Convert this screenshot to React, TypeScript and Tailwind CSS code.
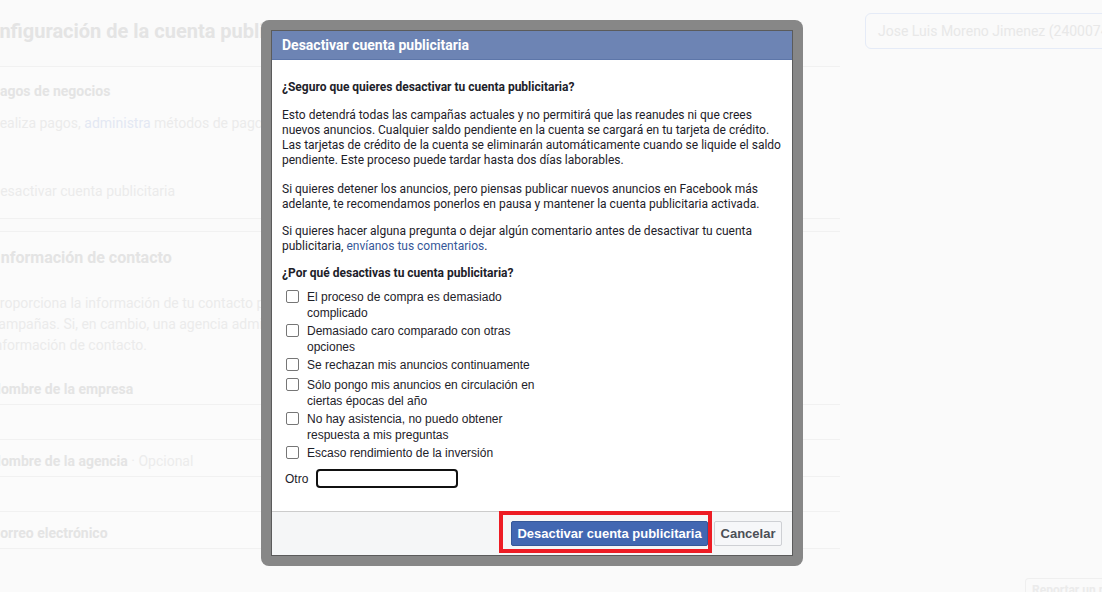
import React from 'react';

const reasons = [
  'El proceso de compra es demasiado complicado',
  'Demasiado caro comparado con otras opciones',
  'Se rechazan mis anuncios continuamente',
  'Sólo pongo mis anuncios en circulación en ciertas épocas del año',
  'No hay asistencia, no puedo obtener respuesta a mis preguntas',
  'Escaso rendimiento de la inversión',
];

function Background() {
  return (
    <div className="flex h-full flex-col">
      {/* header row */}
      <div className="flex items-start pt-[13px]">
        <h1 className="ml-[-25px] mt-[6px] whitespace-nowrap text-[20px] font-bold leading-[24px] text-[#e4e4e4]">
          Configuración de la cuenta publicitaria
        </h1>
        <div className="ml-auto mr-[-60px] flex h-[36px] w-[297px] shrink-0 items-center whitespace-nowrap rounded-[6px] border border-[#e5ebf7] px-[12px] text-[14px] text-[#e8e8e8]">
          Jose Luis Moreno Jimenez (2400074...
        </div>
      </div>

      {/* pagos card */}
      <div className="ml-[-20px] mt-[17px] h-[153px] w-[860px] border-y border-[#f1f1f1] bg-[#fbfbfb] pl-[11px] pt-[14px]">
        <div className="text-[14px] font-bold leading-[20px] text-[#e4e4e4]">Pagos de negocios</div>
        <div className="mt-[12px] text-[14px] leading-[20px] text-[#ebebeb]">
          Realiza pagos, <span className="text-[#e3e8f3]">administra</span> métodos de pago y ver la actividad
        </div>
        <div className="mt-[48px] text-[14px] leading-[20px] text-[#ebebeb]">Desactivar cuenta publicitaria</div>
      </div>

      {/* contacto card */}
      <div className="ml-[-20px] mt-[12px] w-[860px] border-t border-[#f1f1f1] bg-[#fbfbfb] pl-[11px] pt-[16px]">
        <div className="ml-[5px] text-[16px] font-bold leading-[20px] text-[#e4e4e4]">Información de contacto</div>
        <div className="mt-[25px] whitespace-nowrap text-[14px] leading-[21px] text-[#ebebeb]">
          <div>Proporciona la información de tu contacto principal para las facturas y las</div>
          <div>campañas. Si, en cambio, una agencia administra la cuenta, introduce su</div>
          <div>información de contacto.</div>
        </div>
        <div className="mt-[19px] flex h-[30px] items-end border-b border-[#f1f1f1] pb-[5px] text-[14px] font-bold leading-[20px] text-[#e4e4e4]">
          Nombre de la empresa
        </div>
        <div className="h-[35px] border-b border-[#f1f1f1]" />
        <div className="flex h-[37px] items-end border-b border-[#f1f1f1] pb-[5px] text-[14px] leading-[20px]">
          <span className="font-bold text-[#e4e4e4]">Nombre de la agencia</span>
          <span className="text-[#ececec]">&nbsp;· Opcional</span>
        </div>
        <div className="h-[35px] border-b border-[#f1f1f1]" />
        <div className="flex h-[37px] items-end border-b border-[#f1f1f1] pb-[5px] text-[14px] font-bold leading-[20px] text-[#e4e4e4]">
          Correo electrónico
        </div>
      </div>

      <div className="mt-auto flex justify-end">
        <div className="mr-[-40px] h-[14px] w-[117px] overflow-hidden whitespace-nowrap rounded-t-[4px] border border-b-0 border-[#efefef] px-[6px] pt-[4px] text-[12px] font-bold leading-[14px] text-[#ebebeb]">
          Reportar un problema
        </div>
      </div>
    </div>
  );
}

function Checkbox() {
  return <span className="mt-[1px] ml-[4px] h-[13px] w-[13px] shrink-0 rounded-[2px] border border-[#767676] bg-white" />;
}

export default function App() {
  return (
    <div className="relative h-[592px] w-[1102px] overflow-hidden bg-[#fafafa] font-['Roboto',sans-serif]">
      <Background />

      {/* modal dialog */}
      <div className="absolute left-[261px] top-[20px] h-[546px] w-[542px] rounded-[8px] bg-[#878787] p-[10px]">
        <div className="flex h-full flex-col border border-[#5b5b5b] bg-white">
          <div className="flex h-[29px] shrink-0 items-center border-b border-[#5d76a9] bg-[#6d84b4] pl-[10px] text-[14px] font-bold text-white">
            Desactivar cuenta publicitaria
          </div>

          <div className="flex-1 px-[10px] pt-[20px] text-[12px] leading-[15px] text-[#1d2129]">
            <p className="font-bold">¿Seguro que quieres desactivar tu cuenta publicitaria?</p>
            <p className="mt-[13px]">
              Esto detendrá todas las campañas actuales y no permitirá que las reanudes ni que crees nuevos anuncios. Cualquier saldo pendiente en la cuenta se cargará en tu tarjeta de crédito. Las tarjetas de crédito de la cuenta se eliminarán automáticamente cuando se liquide el saldo pendiente. Este proceso puede tardar hasta dos días laborables.
            </p>
            <p className="mt-[14px]">
              Si quieres detener los anuncios, pero piensas publicar nuevos anuncios en Facebook más adelante, te recomendamos ponerlos en pausa y mantener la cuenta publicitaria activada.
            </p>
            <p className="mt-[12px]">
              Si quieres hacer alguna pregunta o dejar algún comentario antes de desactivar tu cuenta publicitaria, <span className="text-[#365899]">envíanos tus comentarios</span>.
            </p>
            <p className="mt-[12px] font-bold">¿Por qué desactivas tu cuenta publicitaria?</p>

            <div className="mt-[8px] flex flex-col gap-[2px] font-['Liberation_Sans',Arial,sans-serif] leading-[16px]">
              {reasons.map((r) => (
                <label key={r} className="flex min-h-[18px] items-start gap-[8px]">
                  <Checkbox />
                  <span className="w-[232px]">{r}</span>
                </label>
              ))}
              <div className="mt-[4px] flex items-center gap-[8px] pl-[3px]">
                <span>Otro</span>
                <span className="h-[19px] w-[142px] rounded-[4px] border-2 border-[#111] bg-white" />
              </div>
            </div>
          </div>

          <div className="flex h-[44px] shrink-0 items-center justify-end gap-[6px] border-t border-[#cccccc] bg-[#f5f6f7] pr-[10px] font-['Liberation_Sans',Arial,sans-serif]">
            <div className="relative">
              <span className="pointer-events-none absolute -bottom-[7px] -left-[12px] -right-[4px] -top-[10px] border-[4px] border-[#ed1c24]" />
              <button className="h-[25px] w-[197px] rounded-[2px] border border-[#365899] bg-[#4267b2] text-[13px] font-bold text-white">
                Desactivar cuenta publicitaria
              </button>
            </div>
            <button className="h-[25px] w-[68px] rounded-[2px] border border-[#ced0d4] bg-[#f6f7f9] text-[13px] font-bold text-[#4b4f56]">
              Cancelar
            </button>
          </div>
        </div>
      </div>
    </div>
  );
}
